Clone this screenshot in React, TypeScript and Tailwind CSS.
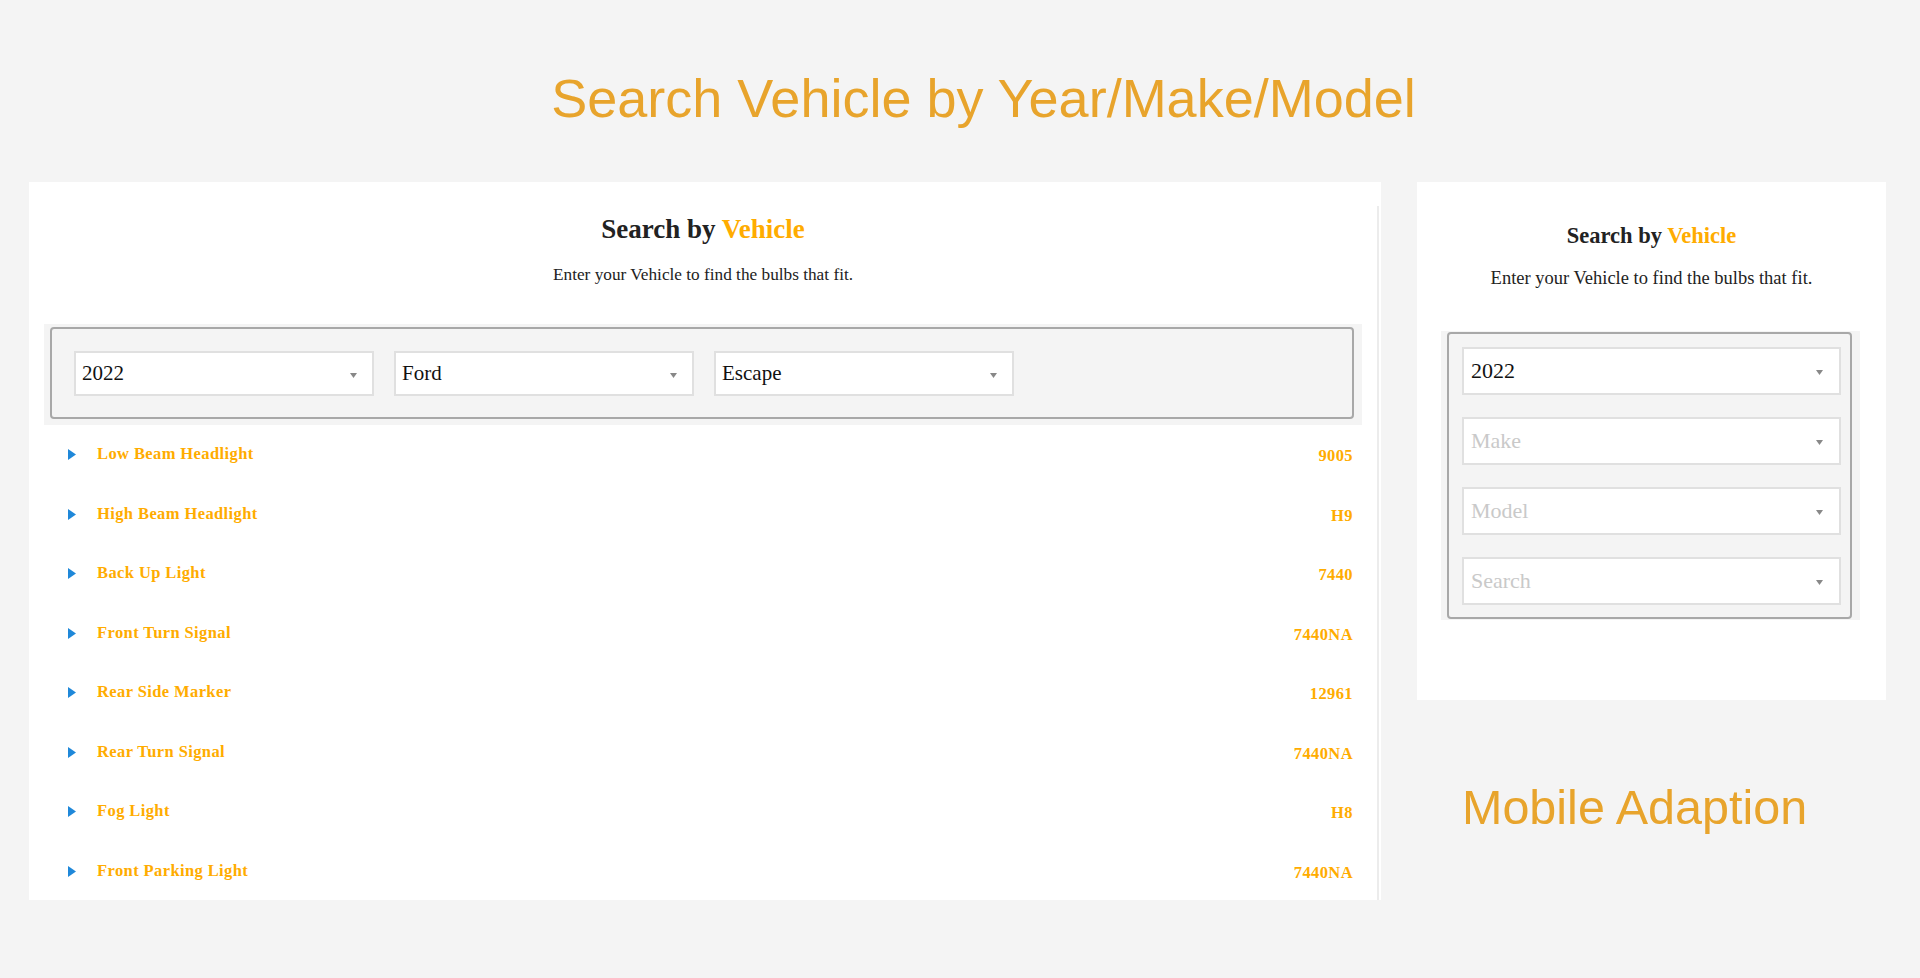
import React from 'react'

const bulbs = [
  { name: 'Low Beam Headlight', code: '9005' },
  { name: 'High Beam Headlight', code: 'H9' },
  { name: 'Back Up Light', code: '7440' },
  { name: 'Front Turn Signal', code: '7440NA' },
  { name: 'Rear Side Marker', code: '12961' },
  { name: 'Rear Turn Signal', code: '7440NA' },
  { name: 'Fog Light', code: 'H8' },
  { name: 'Front Parking Light', code: '7440NA' },
]

const serif = "font-['Liberation_Serif','Times_New_Roman',serif]"

function Caret() {
  return (
    <svg width="7" height="5" viewBox="0 0 7 5" className="shrink-0">
      <polygon points="0,0 7,0 3.5,5" fill="#888888" />
    </svg>
  )
}

function Select({ value, placeholder, big }: { value?: string; placeholder?: string; big?: boolean }) {
  return (
    <div
      className={
        big
          ? 'flex h-[48px] w-full items-center justify-between border-2 border-[#e0e0e0] bg-white pl-[7px] pr-[16px]'
          : 'flex h-[45px] w-[300px] items-center justify-between border-2 border-[#e0e0e0] bg-white pl-[6px] pr-[15px]'
      }
    >
      <span
        className={`${serif} ${big ? 'text-[22px]' : 'text-[21px]'} leading-none ${value ? 'text-[#111]' : 'text-[#c9c9c9]'}`}
      >
        {value ?? placeholder}
      </span>
      <div className="pt-[3px]">
        <Caret />
      </div>
    </div>
  )
}

function Heading({ size }: { size: string }) {
  return (
    <h2 className={`${serif} ${size} text-center font-bold leading-none text-[#222]`}>
      Search by <span className="text-[#ffac00]">Vehicle</span>
    </h2>
  )
}

export default function App() {
  return (
    <div className="min-h-[978px] w-full bg-[#f4f4f4] font-['Liberation_Sans',Arial,sans-serif]">
      <div className="flex h-[182px] items-center justify-center pl-[47px] pt-[14px]">
        <h1 className="text-[54px] font-normal leading-none text-[#e8a42c]">Search Vehicle by Year/Make/Model</h1>
      </div>

      <div className="flex items-start gap-[36px] pl-[29px]">
        {/* desktop card */}
        <div className="h-[718px] w-[1352px] bg-white pt-[24px]">
          <div className="h-full w-[1350px] border-r-2 border-[#ececec]">
            <div className="pt-[10px]">
              <Heading size="text-[27px]" />
              <p className={`${serif} mt-[21px] text-center text-[17.25px] leading-[21px] text-[#222]`}>
                Enter your Vehicle to find the bulbs that fit.
              </p>
            </div>

            <div className="mx-[15px] mt-[39px] bg-[#f4f4f4] pb-[6px] pl-[6px] pr-[8px] pt-[3px]">
              <div className="flex gap-[20px] rounded-[4px] border-2 border-[#a8a8a8] pb-[21px] pl-[22px] pt-[22px]">
                <Select value="2022" />
                <Select value="Ford" />
                <Select value="Escape" />
              </div>
            </div>

            <div className="flex flex-col">
              {bulbs.map((b, i) => (
                <div key={i} className="flex h-[59.5px] items-center justify-between pl-[39px] pr-[24px]">
                  <div className="flex items-center gap-[21px]">
                    <svg width="8" height="11" viewBox="0 0 8 11">
                      <polygon points="0,0 8,5.5 0,11" fill="#1f88d9" />
                    </svg>
                    <span className={`${serif} text-[16.5px] font-bold tracking-[0.4px] text-[#ffac00]`}>{b.name}</span>
                  </div>
                  <span className={`${serif} pt-[4px] text-[16.5px] font-bold tracking-[0.4px] text-[#ffac00]`}>{b.code}</span>
                </div>
              ))}
            </div>
          </div>
        </div>

        {/* mobile column */}
        <div className="w-[469px]">
          <div className="h-[518px] bg-white pt-[43px]">
            <Heading size="text-[22.5px]" />
            <p className={`${serif} mt-[19px] text-center text-[18.5px] leading-[22px] text-[#222]`}>
              Enter your Vehicle to find the bulbs that fit.
            </p>
            <div className="ml-[24px] mr-[26px] mt-[42px] bg-[#f4f4f4] py-[1px] pl-[6px] pr-[8px]">
              <div className="flex flex-col gap-[22px] rounded-[4px] border-2 border-[#a8a8a8] pb-[12px] pl-[13px] pr-[9px] pt-[13px]">
                <Select value="2022" big />
                <Select placeholder="Make" big />
                <Select placeholder="Model" big />
                <Select placeholder="Search" big />
              </div>
            </div>
          </div>
          <div className="pl-[45px] pt-[83px]">
            <span className="text-[48.5px] leading-none text-[#e8a42c]">Mobile Adaption</span>
          </div>
        </div>
      </div>
    </div>
  )
}
